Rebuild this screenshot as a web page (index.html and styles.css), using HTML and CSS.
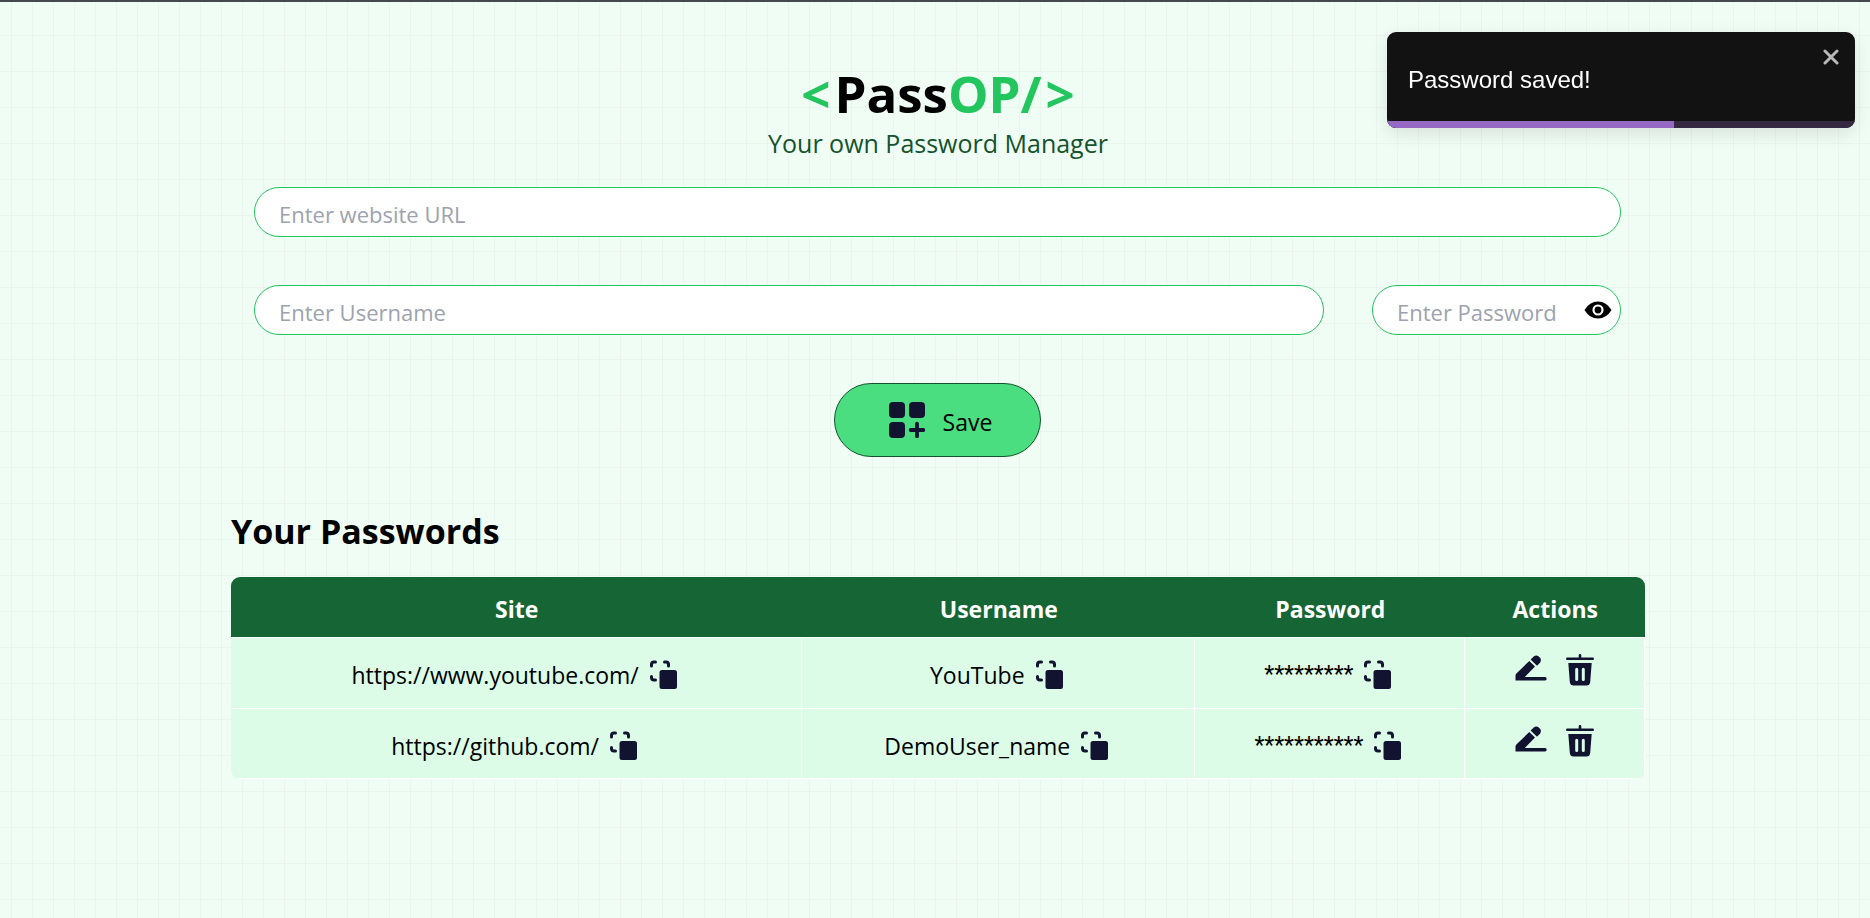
FILE: index.html
```html
<!DOCTYPE html>
<html lang="en">
<head>
<meta charset="utf-8">
<meta name="viewport" content="width=device-width, initial-scale=1">
<title>PassOP</title>
<link rel="stylesheet" href="styles.css">
</head>
<body>
<svg class="sprite" aria-hidden="true">
  <symbol id="copy" viewBox="0 0 28 30">
    <path d="M1.500 6V4.500Q1.500 2 4 2H5.500M14.500 2H16Q18.500 2 18.500 4.500V6M1.500 16.500V17.500Q1.500 20 4 20H5.500" fill="none" stroke="currentColor" stroke-width="3" stroke-linecap="round"/>
    <rect x="9.500" y="10" width="17.500" height="19" rx="2.500" fill="currentColor"/>
  </symbol>
  <symbol id="edit" viewBox="0 0 32 32">
    <path d="M.5 26.500V21.500Q.5 20.300 1.400 19.400L14.300 7L20 12.600L9.800 23.100H30Q31.700 23.300 31.700 24.800T30 26.500Z" fill="currentColor"/>
    <path d="M15.600 5.500L18.800 2.500Q21 .7 23.500 2.200L25.300 4Q27 6.300 25.200 8.600L22 11.700Z" fill="currentColor"/>
  </symbol>
  <symbol id="trash" viewBox="0 0 28 32">
    <path d="M1.300 4.700H26.700M14 1.300V4" fill="none" stroke="currentColor" stroke-width="2.600" stroke-linecap="round"/>
    <path fill-rule="evenodd" d="M2.300 9H25.700L24.200 28Q23.800 31.500 20.500 31.500H7.500Q4.200 31.500 3.800 28ZM9.200 15.300V25.500Q9.200 27 10.700 27T12.200 25.500V15.300Q12.200 13.800 10.700 13.800T9.200 15.300ZM15.800 15.300V25.500Q15.800 27 17.300 27T18.800 25.500V15.300Q18.800 13.800 17.300 13.800T15.800 15.300Z" fill="currentColor"/>
  </symbol>
</svg>

<main class="page">
  <h1 class="logo"><span class="accent bracket">&lt;</span>Pass<span class="accent">OP/</span><span class="accent bracket-end">&gt;</span></h1>
  <p class="tagline">Your own Password Manager</p>

  <form class="form">
    <input class="field" type="text" placeholder="Enter website URL" aria-label="Website URL">
    <div class="form-row">
      <input class="field" type="text" placeholder="Enter Username" aria-label="Username">
      <div class="secret">
        <input class="field" type="password" placeholder="Enter Password" aria-label="Password">
        <button class="eye" type="button" aria-label="Show password">
          <svg width="28" height="18" viewBox="0 0 28 18"><path d="M.5 9Q5.500.5 14 .5T27.500 9Q22.500 17.500 14 17.500T.5 9Z" fill="#000"/><circle cx="14" cy="9" r="4.500" fill="#000" stroke="#fff" stroke-width="2.200"/></svg>
        </button>
      </div>
    </div>
    <button class="save" type="button">
      <svg width="36" height="36" viewBox="0 0 36 36" fill="currentColor" aria-hidden="true"><rect width="16" height="16" rx="4"/><rect x="20" width="16" height="16" rx="4"/><rect y="20" width="16" height="16" rx="4"/><path d="M28 21.700V34.300M21.700 28H34.300" stroke="currentColor" stroke-width="3.800" stroke-linecap="round"/></svg>
      <span class="save-label">Save</span>
    </button>
  </form>

  <h2 class="heading">Your Passwords</h2>
  <table class="table">
    <colgroup><col class="col-site"><col class="col-user"><col class="col-pass"><col class="col-act"></colgroup>
    <thead>
      <tr><th>Site</th><th>Username</th><th>Password</th><th>Actions</th></tr>
    </thead>
    <tbody>
      <tr>
        <td><div class="cell"><a href="https://www.youtube.com/">https://www.youtube.com/</a><button class="icon" type="button" aria-label="Copy site"><svg width="28" height="30"><use href="#copy"/></svg></button></div></td>
        <td><div class="cell"><span>YouTube</span><button class="icon" type="button" aria-label="Copy username"><svg width="28" height="30"><use href="#copy"/></svg></button></div></td>
        <td><div class="cell"><span class="mask">*********</span><button class="icon" type="button" aria-label="Copy password"><svg width="28" height="30"><use href="#copy"/></svg></button></div></td>
        <td><div class="actions"><button class="icon" type="button" aria-label="Edit"><svg width="32" height="32"><use href="#edit"/></svg></button><button class="icon" type="button" aria-label="Delete"><svg width="28" height="32"><use href="#trash"/></svg></button></div></td>
      </tr>
      <tr>
        <td><div class="cell"><a href="https://github.com/">https://github.com/</a><button class="icon" type="button" aria-label="Copy site"><svg width="28" height="30"><use href="#copy"/></svg></button></div></td>
        <td><div class="cell"><span>DemoUser_name</span><button class="icon" type="button" aria-label="Copy username"><svg width="28" height="30"><use href="#copy"/></svg></button></div></td>
        <td><div class="cell"><span class="mask">***********</span><button class="icon" type="button" aria-label="Copy password"><svg width="28" height="30"><use href="#copy"/></svg></button></div></td>
        <td><div class="actions"><button class="icon" type="button" aria-label="Edit"><svg width="32" height="32"><use href="#edit"/></svg></button><button class="icon" type="button" aria-label="Delete"><svg width="28" height="32"><use href="#trash"/></svg></button></div></td>
      </tr>
    </tbody>
  </table>
</main>

<div class="toast" role="alert">
  <p class="toast-text">Password saved!</p>
  <button class="toast-close" type="button" aria-label="Close">
    <svg width="16" height="16" viewBox="0 0 16 16"><path d="M2 2L14 14M14 2L2 14" stroke="#b8b8b8" stroke-width="3" stroke-linecap="round"/></svg>
  </button>
  <div class="toast-track"><div class="toast-bar"></div></div>
</div>
</body>
</html>
```

FILE: styles.css
```css
* { box-sizing: border-box; }

body {
  margin: 0;
  min-height: 100vh;
  border-top: 2px solid #45494f;
  font-family: "Open Sans", "Noto Sans", sans-serif;
  font-size: 23px;
  line-height: 36px;
  color: #000;
  background-color: #f0fdf4;
  background-image:
    linear-gradient(to right, #8080800f 1px, transparent 1px),
    linear-gradient(to bottom, #8080800f 1px, transparent 1px);
  background-size: 21px 36px;
  background-position: 11px 35px;
}

h1, h2, p { margin: 0; }
a { color: inherit; text-decoration: none; }
button, input { font: inherit; color: inherit; }
button { padding: 0; border: 0; background: none; cursor: pointer; }
svg { display: block; }
.sprite { position: absolute; width: 0; height: 0; }

.page { padding: 64px 225px 0 231px; }

.logo {
  font-size: 51px;
  line-height: 54px;
  font-weight: 700;
  text-align: center;
}
.accent { color: #22c55e; }
.bracket { margin-right: 4px; }
.bracket-end { margin-left: 4px; }

.tagline {
  padding-top: 2px;
  font-size: 25px;
  line-height: 42px;
  text-align: center;
  color: #14532d;
}

.form {
  display: flex;
  flex-direction: column;
  align-items: center;
  gap: 48px;
  padding: 23px 24px 0 23px;
}
.form-row {
  display: grid;
  grid-template-columns: 1fr 249px;
  gap: 48px;
  width: 100%;
}
.field {
  width: 100%;
  height: 50px;
  padding: 4px 24px 0;
  border: 1px solid #22c55e;
  border-radius: 25px;
  background: #fff;
  font-size: 22px;
  outline: 0;
}
.field::placeholder { color: #9ca3af; opacity: 1; }
.secret { position: relative; }
.eye { position: absolute; right: 9px; top: 16px; }

.save {
  display: flex;
  align-items: center;
  gap: 18px;
  height: 74px;
  padding: 0 48px 0 54px;
  border: 1px solid #14532d;
  border-radius: 37px;
  background: #4ade80;
}
.save svg { color: #121331; }
.save-label { padding-top: 4px; }

.heading {
  margin: 48px 0 20px;
  font-size: 34px;
  line-height: 52px;
  font-weight: 700;
}

.table {
  width: 100%;
  border-collapse: separate;
  border-spacing: 0;
  border-radius: 9px;
  overflow: hidden;
  table-layout: fixed;
  text-align: center;
}
.col-site { width: 40.4%; }
.col-user { width: 27.8%; }
.col-pass { width: 19.1%; }
.col-act { width: 12.7%; }

th {
  height: 60px;
  padding: 4px 0 0;
  background: #166534;
  color: #fff;
  font-weight: 700;
}
td {
  height: 71px;
  padding: 0;
  border-top: 1px solid #fff;
  border-right: 1px solid #fff;
  background: #dcfce7;
}
tbody tr:last-child td { border-bottom: 1px solid #fff; }

.cell {
  display: flex;
  justify-content: center;
  align-items: center;
  gap: 11px;
  padding: 4px 3px 0 0;
}
.mask { font-family: Roboto, sans-serif; }
.icon { color: #121331; }
.actions {
  display: flex;
  justify-content: center;
  gap: 19px;
  padding-bottom: 6px;
}

.toast {
  position: fixed;
  top: 32px;
  right: 15px;
  width: 468px;
  padding: 30px 21px;
  border-radius: 9px;
  overflow: hidden;
  background: #121212;
  color: #fff;
  font-family: "Liberation Sans", Arial, sans-serif;
  font-size: 24px;
  box-shadow: 0 6px 18px #0000001a;
}
.toast-text { line-height: 36px; }
.toast-close { position: absolute; top: 17px; right: 16px; }
.toast-track {
  position: absolute;
  left: 0;
  right: 0;
  bottom: 0;
  height: 7px;
  background: #342941;
}
.toast-bar { width: 61.300%; height: 100%; background: #9569c4; }
```
